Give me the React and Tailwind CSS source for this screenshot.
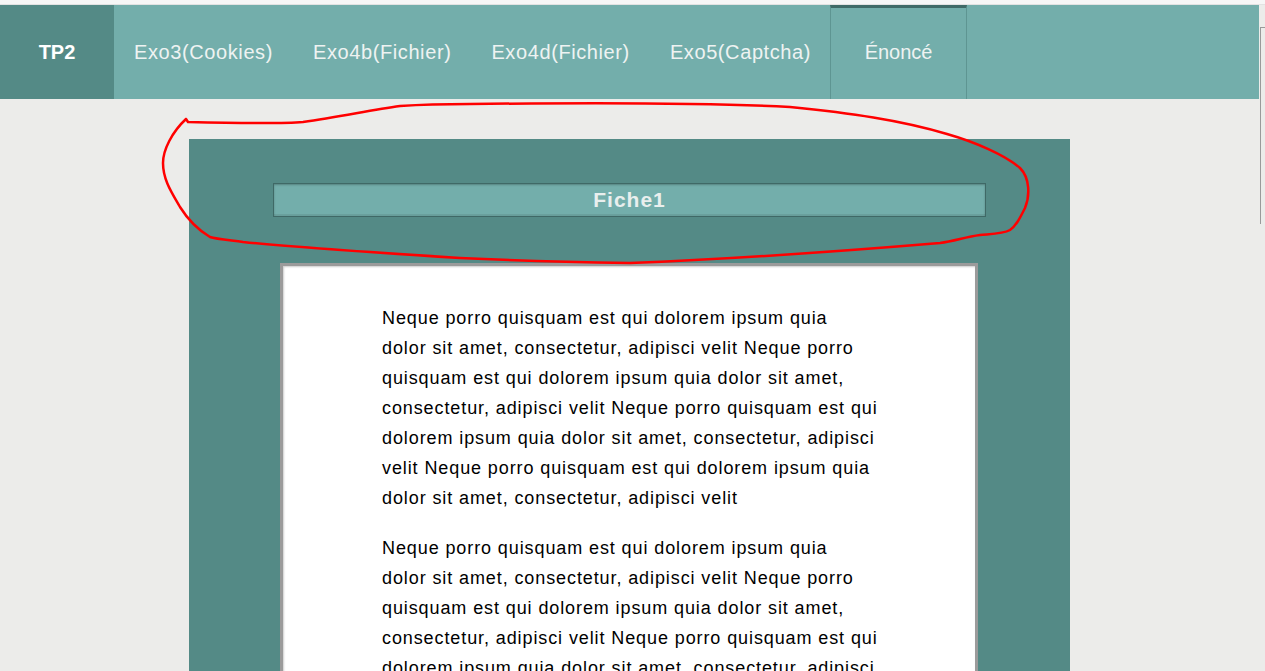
import React from "react";

const lines = [
  "Neque porro quisquam est qui dolorem ipsum quia",
  "dolor sit amet, consectetur, adipisci velit Neque porro",
  "quisquam est qui dolorem ipsum quia dolor sit amet,",
  "consectetur, adipisci velit Neque porro quisquam est qui",
  "dolorem ipsum quia dolor sit amet, consectetur, adipisci",
  "velit Neque porro quisquam est qui dolorem ipsum quia",
  "dolor sit amet, consectetur, adipisci velit",
];

const items = ["Exo3(Cookies)", "Exo4b(Fichier)", "Exo4d(Fichier)", "Exo5(Captcha)"];

function Para({ className = "" }) {
  return (
    <p className={className}>
      {lines.map((l, i) => (
        <span key={i} className="block whitespace-nowrap">
          {l}
        </span>
      ))}
    </p>
  );
}

export default function App() {
  return (
    <div
      className="relative w-[1265px] h-[671px] overflow-hidden bg-[#ececea]"
      style={{ fontFamily: '"Liberation Sans", Arial, sans-serif' }}
    >
      <div className="h-[5px] bg-[#f6f6f6] border-b border-[#e2e2e2]" />
      <div className="flex">
        <nav className="flex w-[1259px] h-[94px] bg-[#73aeab] text-[20px] text-[#eef3f2]">
          <div className="flex items-center justify-center w-[114px] bg-[#548a86] font-bold text-white">
            TP2
          </div>
          {items.map((t) => (
            <div key={t} className="flex items-center px-[20px] tracking-[0.6px]">
              {t}
            </div>
          ))}
          <div className="flex items-center justify-center w-[137px] ml-[-1px] border-x border-[#5e9592] border-t-[3px] border-t-[#3f6a67] pb-[3px]">
            Énoncé
          </div>
        </nav>
      </div>

      <div className="absolute left-[1260px] top-[27px] w-[5px] h-[197px] border-l border-t border-[#9a9a9a]" />

      <main className="ml-[189px] mt-[40px] w-[881px] h-[600px] bg-[#548a86] pt-[44px]">
        <div className="mx-[84px] h-[34px] flex items-center justify-center bg-[#73aeab] border border-[#3f6966] shadow-[inset_0_1px_2px_rgba(0,0,0,0.25),inset_0_-2px_0_rgba(0,0,0,0.08)] text-[21px] tracking-[1px] font-bold text-[#e9efee]">
          Fiche1
        </div>
        <div className="ml-[91px] mr-[92px] mt-[46px] h-[500px] bg-white border-[3px] border-[#9b9b9b] border-b-0 shadow-[inset_1px_1px_2px_rgba(0,0,0,0.2)] pt-[37px] pl-[99px]">
          <div className="w-[500px] text-[18px] leading-[30px] tracking-[0.9px] text-black">
            <Para />
            <Para className="mt-[20px]" />
          </div>
        </div>
      </main>

      <svg
        className="absolute left-0 top-0 pointer-events-none"
        width="1265"
        height="671"
        viewBox="0 0 1265 671"
        fill="none"
      >
        <path
          d="M186 119 L188 122 C 230 123, 280 124, 303 122 C 340 117, 370 110, 400 106 C 430 104, 450 104, 470 104 C 560 103, 700 102, 790 107 C 850 113, 900 120, 947 134 C 975 142, 1005 155, 1020 168 C 1030 178, 1030 196, 1025 208 C 1020 218, 1016 226, 1010 230 C 1003 234, 990 234, 980 235 C 965 237, 955 241, 940 243 C 880 248, 760 258, 630 263 C 560 262, 500 260, 460 258 C 380 253, 300 248, 243 242 C 228 240, 216 239, 210 237 C 195 228, 185 215, 180 207 C 172 193, 163 180, 163 163 C 163 150, 172 132, 186 119"
          stroke="#ff0000"
          strokeWidth="2.5"
          strokeLinecap="round"
          strokeLinejoin="round"
        />
      </svg>
    </div>
  );
}
